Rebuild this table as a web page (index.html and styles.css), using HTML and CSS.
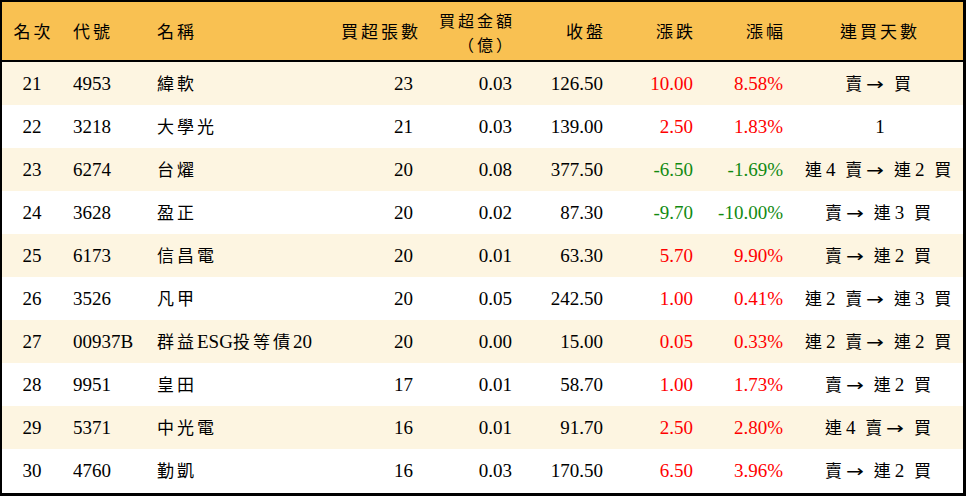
FILE: index.html
```html
<!DOCTYPE html>
<html lang="zh-Hant">
<head>
<meta charset="utf-8">
<title>買超排行</title>
<link rel="stylesheet" href="styles.css">
</head>
<body>
<div class="frame">
<table class="rank">
<colgroup>
<col class="w-rank"><col class="w-code"><col class="w-name"><col class="w-vol"><col class="w-amt"><col class="w-close"><col class="w-chg"><col class="w-pct"><col class="w-days">
</colgroup>
<thead>
<tr>
<th class="ctr">名次</th>
<th class="lft">代號</th>
<th class="lft">名稱</th>
<th class="rgt">買超張數</th>
<th class="rgt two"><span class="ln">買超金額</span><span class="ln">（億）</span></th>
<th class="rgt">收盤</th>
<th class="rgt">漲跌</th>
<th class="rgt">漲幅</th>
<th class="ctr">連買天數</th>
</tr>
</thead>
<tbody>
<tr class="odd"><td class="ctr">21</td><td class="lft">4953</td><td class="lft"><span class="c">緯軟</span></td><td class="rgt">23</td><td class="rgt">0.03</td><td class="rgt">126.50</td><td class="rgt up">10.00</td><td class="rgt up">8.58%</td><td class="ctr days"><span class="c">賣</span><span class="ar">→</span> <span class="c">買</span></td></tr>
<tr><td class="ctr">22</td><td class="lft">3218</td><td class="lft"><span class="c">大學光</span></td><td class="rgt">21</td><td class="rgt">0.03</td><td class="rgt">139.00</td><td class="rgt up">2.50</td><td class="rgt up">1.83%</td><td class="ctr days">1</td></tr>
<tr class="odd"><td class="ctr">23</td><td class="lft">6274</td><td class="lft"><span class="c">台燿</span></td><td class="rgt">20</td><td class="rgt">0.08</td><td class="rgt">377.50</td><td class="rgt dn">-6.50</td><td class="rgt dn">-1.69%</td><td class="ctr days"><span class="c">連</span>4 <span class="c">賣</span><span class="ar">→</span> <span class="c">連</span>2 <span class="c">買</span></td></tr>
<tr><td class="ctr">24</td><td class="lft">3628</td><td class="lft"><span class="c">盈正</span></td><td class="rgt">20</td><td class="rgt">0.02</td><td class="rgt">87.30</td><td class="rgt dn">-9.70</td><td class="rgt dn">-10.00%</td><td class="ctr days"><span class="c">賣</span><span class="ar">→</span> <span class="c">連</span>3 <span class="c">買</span></td></tr>
<tr class="odd"><td class="ctr">25</td><td class="lft">6173</td><td class="lft"><span class="c">信昌電</span></td><td class="rgt">20</td><td class="rgt">0.01</td><td class="rgt">63.30</td><td class="rgt up">5.70</td><td class="rgt up">9.90%</td><td class="ctr days"><span class="c">賣</span><span class="ar">→</span> <span class="c">連</span>2 <span class="c">買</span></td></tr>
<tr><td class="ctr">26</td><td class="lft">3526</td><td class="lft"><span class="c">凡甲</span></td><td class="rgt">20</td><td class="rgt">0.05</td><td class="rgt">242.50</td><td class="rgt up">1.00</td><td class="rgt up">0.41%</td><td class="ctr days"><span class="c">連</span>2 <span class="c">賣</span><span class="ar">→</span> <span class="c">連</span>3 <span class="c">買</span></td></tr>
<tr class="odd"><td class="ctr">27</td><td class="lft">00937B</td><td class="lft"><span class="c">群益</span>ESG<span class="c">投等債</span>20</td><td class="rgt">20</td><td class="rgt">0.00</td><td class="rgt">15.00</td><td class="rgt up">0.05</td><td class="rgt up">0.33%</td><td class="ctr days"><span class="c">連</span>2 <span class="c">賣</span><span class="ar">→</span> <span class="c">連</span>2 <span class="c">買</span></td></tr>
<tr><td class="ctr">28</td><td class="lft">9951</td><td class="lft"><span class="c">皇田</span></td><td class="rgt">17</td><td class="rgt">0.01</td><td class="rgt">58.70</td><td class="rgt up">1.00</td><td class="rgt up">1.73%</td><td class="ctr days"><span class="c">賣</span><span class="ar">→</span> <span class="c">連</span>2 <span class="c">買</span></td></tr>
<tr class="odd"><td class="ctr">29</td><td class="lft">5371</td><td class="lft"><span class="c">中光電</span></td><td class="rgt">16</td><td class="rgt">0.01</td><td class="rgt">91.70</td><td class="rgt up">2.50</td><td class="rgt up">2.80%</td><td class="ctr days"><span class="c">連</span>4 <span class="c">賣</span><span class="ar">→</span> <span class="c">買</span></td></tr>
<tr><td class="ctr">30</td><td class="lft">4760</td><td class="lft"><span class="c">勤凱</span></td><td class="rgt">16</td><td class="rgt">0.03</td><td class="rgt">170.50</td><td class="rgt up">6.50</td><td class="rgt up">3.96%</td><td class="ctr days"><span class="c">賣</span><span class="ar">→</span> <span class="c">連</span>2 <span class="c">買</span></td></tr>
</tbody>
</table>
</div>
</body>
</html>
```
FILE: styles.css
```css
html, body {
  margin: 0;
  padding: 0;
  background: #ffffff;
}

.frame {
  width: 966px;
  height: 496px;
  box-sizing: border-box;
  border-top: 2px solid #000;
  border-left: 2px solid #000;
  border-right: 3px solid #000;
  border-bottom: 3px solid #000;
  overflow: hidden;
}

.rank {
  width: 961px;
  border-collapse: collapse;
  table-layout: fixed;
  font-family: "Liberation Serif", "Noto Sans CJK TC", serif;
  font-size: 19px;
  color: #000;
}

.w-rank { width: 60px; }
.w-code { width: 84px; }
.w-name { width: 184px; }
.w-vol { width: 94px; }
.w-amt { width: 99px; }
.w-close { width: 91px; }
.w-chg { width: 90px; }
.w-pct { width: 90px; }
.w-days { width: 169px; }

.rank thead tr {
  background: #f9c152;
  height: 59px;
}

.rank th {
  font-family: "Noto Sans CJK TC", sans-serif;
  font-weight: 400;
  font-size: 17px;
  letter-spacing: 3px;
  line-height: 20px;
  padding: 0 11px;
  border-bottom: 2px solid #000;
  vertical-align: middle;
  white-space: nowrap;
}

.rank th.rgt {
  padding-right: 8px;
}

.rank th.ctr {
  padding: 0 0 0 3px;
}

.rank th.two {
  padding-top: 1px;
}

.ln {
  display: block;
  font-size: 16px;
  line-height: 24px;
}

.rank td {
  height: 43px;
  padding: 0 11px;
  vertical-align: middle;
  white-space: nowrap;
  line-height: 22px;
}

.rank tbody tr.odd {
  background: #fdf5e1;
}

.rank td.ctr {
  padding: 0;
}

.ctr { text-align: center; }
.lft { text-align: left; }
.rgt { text-align: right; }

.c {
  font-family: "Noto Sans CJK TC", sans-serif;
  font-size: 17px;
  letter-spacing: 3px;
}

.rank td.days {
  word-spacing: 5px;
  padding-left: 3px;
}

.days .c {
  letter-spacing: 4px;
}

.ar {
  display: inline-block;
  width: 18px;
  font-family: "DejaVu Sans", sans-serif;
  font-size: 17px;
  text-align: left;
  word-spacing: 0;
  transform: scaleX(1.25);
  transform-origin: left center;
}

.up { color: #ff0000; }
.dn { color: #118a11; }
```
